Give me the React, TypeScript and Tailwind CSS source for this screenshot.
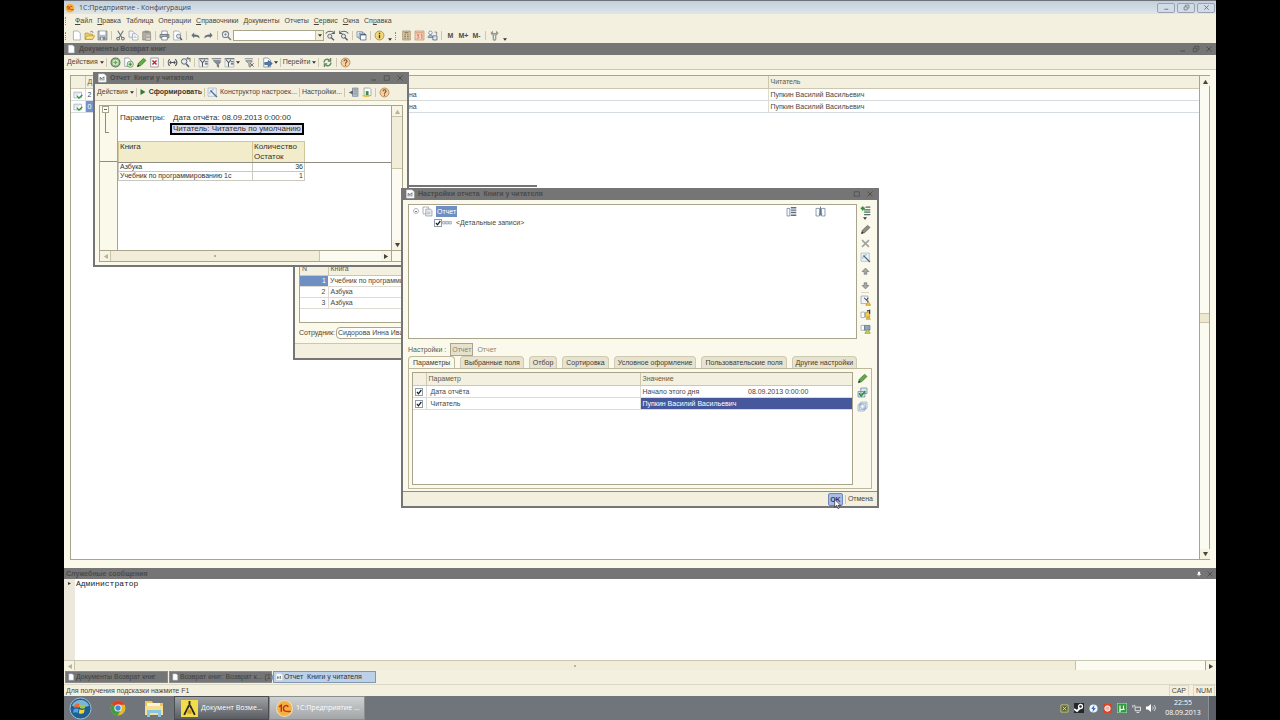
import type { ReactNode } from "react";

/* ICONS, all drawn on a 16x16 grid */
const icons: Record<string, ReactNode> = {
  page: <path d="M3.5 1.5h7l3 3v10h-10z" fill="#fff" stroke="#8a97a8" />,
  open: (
    <>
      <path d="M1.5 13.5v-9h5l1 1.500h5v7.500z" fill="#f0d264" stroke="#b08b25" />
      <path d="M1.500 13.500l3-5h11l-3 5z" fill="#fbe793" stroke="#b08b25" />
      <path d="M9 3c2-2 4-1 4 1" fill="none" stroke="#547" />
    </>
  ),
  save: (
    <>
      <path d="M1.500 1.500h13v13h-13z" fill="#b4bcc6" stroke="#6b7685" />
      <path d="M4 2h8v5H4z" fill="#fff" />
      <path d="M4 10h8v4H4z" fill="#7b8592" />
      <path d="M6 11h2v3H6z" fill="#fff" />
    </>
  ),
  cut: (
    <>
      <path d="M4 1l6 10M12 1L6 11" stroke="#66727f" strokeWidth="1.600" />
      <circle cx="4.500" cy="12.500" r="2" fill="none" stroke="#66727f" strokeWidth="1.500" />
      <circle cx="11.500" cy="12.500" r="2" fill="none" stroke="#66727f" strokeWidth="1.500" />
    </>
  ),
  copy: (
    <>
      <path d="M1.500 1.500h5l3 3v6h-8z" fill="#f4f6f8" stroke="#8a97a8" />
      <path d="M6.500 5.500h5l3 3v6h-8z" fill="#fff" stroke="#8a97a8" />
      <path d="M8 9h4M8 11h5" stroke="#a8b4c2" />
    </>
  ),
  paste: (
    <>
      <path d="M2.500 2.500h11v12h-11z" fill="#b5b1a5" stroke="#7c7a72" />
      <path d="M5 1h6v3H5z" fill="#8f8d86" />
      <path d="M7 6h7v9H7z" fill="#d8d6cf" stroke="#8f8d86" />
      <path d="M8 9h5M8 11h5" stroke="#8f8d86" />
    </>
  ),
  print: (
    <>
      <path d="M4 1.500h8v5H4z" fill="#fff" stroke="#6b7685" />
      <path d="M1.500 6.500h13v5h-13z" fill="#aab2bc" stroke="#59636f" />
      <path d="M4 9.500h8v5H4z" fill="#fff" stroke="#59636f" />
      <path d="M11 8h2" stroke="#3c8b3c" />
    </>
  ),
  preview: (
    <>
      <path d="M2.500 1.500h7l3 3v10h-10z" fill="#fff" stroke="#8a97a8" />
      <circle cx="9.500" cy="9" r="3" fill="#d6e4ee" stroke="#59636f" />
      <path d="M11.500 11l3 3.500" stroke="#59636f" strokeWidth="2" />
    </>
  ),
  undo: <path d="M2 7.500l4-4v3c5 0 8 1 8 6-2-2-4-3-8-2.500v2z" fill="#66727f" />,
  redo: <path d="M14 7.500l-4-4v3c-5 0-8 1-8 6 2-2 4-3 8-2.500v2z" fill="#66727f" />,
  search: (
    <>
      <circle cx="6.500" cy="6.500" r="4.500" fill="#e4ebef" stroke="#77828f" strokeWidth="1.500" />
      <path d="M4.500 6.500h4M6.500 4.500v4" stroke="#77828f" />
      <path d="M10 10l4.500 4.500" stroke="#77828f" strokeWidth="2.200" />
    </>
  ),
  findNext: (
    <>
      <path d="M1 5c3-4 9-4 12-1M13.500 1v4h-4" fill="none" stroke="#55606f" strokeWidth="1.500" />
      <circle cx="7" cy="9" r="3" fill="#dfe7ec" stroke="#55606f" strokeWidth="1.300" />
      <path d="M9 11l4 4" stroke="#55606f" strokeWidth="2" />
    </>
  ),
  findPrev: (
    <>
      <path d="M15 5c-3-4-9-4-12-1M2.500 1v4h4" fill="none" stroke="#55606f" strokeWidth="1.500" />
      <circle cx="8" cy="9" r="3" fill="#dfe7ec" stroke="#55606f" strokeWidth="1.300" />
      <path d="M10 11l4 4" stroke="#55606f" strokeWidth="2" />
    </>
  ),
  windows: (
    <>
      <path d="M1.500 2.500h8v8h-8z" fill="#fff" stroke="#55708f" />
      <path d="M4.500 4.500h8v8h-8z" fill="#dfe7f1" stroke="#55708f" />
      <path d="M6.500 6.500h8v8h-8z" fill="#fff" stroke="#39587c" />
      <path d="M6.500 7h8" stroke="#39587c" strokeWidth="1.500" />
    </>
  ),
  info: (
    <>
      <circle cx="8" cy="8" r="6.500" fill="#f2d879" stroke="#8e7a3a" />
      <path d="M8 7v5M8 4v1.800" stroke="#4a4334" strokeWidth="2" />
    </>
  ),
  help: (
    <>
      <circle cx="8" cy="8" r="6.500" fill="#f6cf9c" stroke="#a5713c" />
      <path d="M5.800 6.300c0-3 4.500-2.800 4.400-.2C10.200 7.800 8 7.800 8 9.800M8 11v1.600" fill="none" stroke="#6f4a2b" strokeWidth="1.500" />
    </>
  ),
  calc: (
    <>
      <path d="M2.500 1.500h11v13h-11z" fill="#d9c9a8" stroke="#94815b" />
      <path d="M5 4h6M5 7h2M9 7h2M5 9.500h2M9 9.500h2M5 12h2M9 12h2" stroke="#7a6647" strokeWidth="1.400" />
    </>
  ),
  calendar: (
    <>
      <path d="M1.500 1.500h13v13h-13z" fill="#f5d5bb" stroke="#b98b6e" />
      <path d="M2 4h12" stroke="#e0a688" strokeWidth="2" />
      <path d="M4 7h3l-1.500 2C8 9.500 7 13 4 12M10 7l1.500-.5V13" fill="none" stroke="#c8705a" strokeWidth="1.300" />
    </>
  ),
  users: (
    <>
      <circle cx="5" cy="4" r="2.500" fill="#fff" stroke="#55708f" />
      <path d="M1.500 11c0-5 7-5 7 0z" fill="#9ab4d0" stroke="#55708f" />
      <path d="M8.500 8.500h6v6h-6z" fill="#dfe7f1" stroke="#39587c" />
      <path d="M11 3h3v4" fill="none" stroke="#55606f" />
    </>
  ),
  tools: (
    <>
      <path d="M5 2c-3 2-2 5 1 5v7c1 1.500 3 1.500 4 0V7c3 0 4-3 1-5v3H5z" fill="#b7b7b0" stroke="#77776f" />
      <path d="M8 8v5" stroke="#fff" />
    </>
  ),
  add: (
    <>
      <circle cx="8" cy="8" r="6.500" fill="#8fc07f" stroke="#5d6f5c" strokeWidth="1.500" />
      <circle cx="8" cy="8" r="4" fill="#e9f4e5" />
      <path d="M5 8h6M8 5v6" stroke="#6fa565" strokeWidth="2" />
    </>
  ),
  addCopy: (
    <>
      <path d="M2.500 1.500h6l3 3v9h-9z" fill="#fff" stroke="#7f8b99" />
      <circle cx="10.500" cy="10.500" r="4.500" fill="#dff0da" stroke="#4f7a4f" />
      <path d="M8 10.500h5M10.500 8v5" stroke="#338a33" strokeWidth="1.600" />
    </>
  ),
  pencil: (
    <>
      <path d="M2 14l1.500-5L11 2l3.500 3L7 12.500z" fill="#5fae45" stroke="#33632a" />
      <path d="M2 14l1-3 2 2z" fill="#222" />
    </>
  ),
  pencilGray: (
    <>
      <path d="M2 14l1.500-5L11 2l3.500 3L7 12.500z" fill="#8c8f86" stroke="#55584f" />
      <path d="M2 14l1-3 2 2z" fill="#222" />
    </>
  ),
  deletePage: (
    <>
      <path d="M2.500 1.500h11v13h-11z" fill="#fff" stroke="#6e7a88" />
      <path d="M5 5l6 6M11 5l-6 6" stroke="#c8262e" strokeWidth="2.200" />
    </>
  ),
  range: (
    <path d="M4 3c-3 3-3 7 0 10M12 3c3 3 3 7 0 10M4 8h8M6 6L4 8l2 2M10 6l2 2-2 2" fill="none" stroke="#4f565e" strokeWidth="1.500" />
  ),
  searchBack: (
    <>
      <circle cx="6" cy="6.500" r="4" fill="#e4ebef" stroke="#59636f" strokeWidth="1.400" />
      <path d="M9 10l4 4.500" stroke="#59636f" strokeWidth="2.200" />
      <path d="M15 2h-5l2-2M10 2l2 2M14.500 2v5" fill="none" stroke="#59636f" strokeWidth="1.300" />
    </>
  ),
  filterSet: (
    <>
      <path d="M1.500 2.500h13v12h-13z" fill="#f4f4ee" stroke="#a0a9b2" />
      <path d="M1 2.500h14" stroke="#66727f" strokeWidth="1.600" />
      <path d="M3 4l3.500 4v6M10 4L7 8M10 7h4M10 10h4" fill="none" stroke="#4b5764" strokeWidth="1.500" />
    </>
  ),
  filter: (
    <>
      <path d="M1 2.500h14M3 5.500h11" stroke="#66727f" strokeWidth="1.600" />
      <path d="M5 7h9l-3 3.500V15l-2-1.500v-3z" fill="#8c98a5" stroke="#55606f" />
    </>
  ),
  filterOff: (
    <>
      <path d="M1 2.500h12M2 5.500h10" stroke="#8a8f94" strokeWidth="1.500" />
      <path d="M3 6h9l-3 4v5l-2-1.500V10z" fill="#b8bdc1" stroke="#7c7f84" />
      <path d="M9 9l5 5M14 9l-5 5" stroke="#666" strokeWidth="1.400" />
    </>
  ),
  goto: (
    <>
      <path d="M2.500 1.500h6l4 3v10h-10z" fill="#fff" stroke="#6e7a88" />
      <path d="M4 8h5V5l6 4.500-6 4.500v-3H4z" fill="#4f7baf" stroke="#2f4f77" />
    </>
  ),
  refresh: (
    <path d="M3 8c0-5 6-6 8-3M13 8c0 5-6 6-8 3M12.500 1.500v4.500H8.500M3.500 14.500V10h4" fill="none" stroke="#5c8a5c" strokeWidth="1.900" />
  ),
  doc: (
    <>
      <path d="M2.500 1.500h9l3 3v10h-12z" fill="#fff" stroke="#d9d9d9" />
      <path d="M5 7v5M8 9v3M11 6v6M5 7l3 2 3-3" stroke="#4d5a66" strokeWidth="1.300" fill="none" />
    </>
  ),
  posted: (
    <>
      <path d="M1.500 3.500h12v9h-12z" fill="#fff" stroke="#7f93a8" />
      <path d="M3 6h8M3 8h4" stroke="#c0cbd6" />
      <path d="M6 9l3.500 4L15 8" fill="none" stroke="#37933a" strokeWidth="2.200" />
    </>
  ),
  play: <path d="M3 2l10 6-10 6z" fill="#2f7b35" />,
  wand: (
    <>
      <path d="M1.500 1.500h12v12h-12z" fill="#eef2f7" stroke="#9fb0c3" />
      <path d="M4 10c0-4 2-6 6-6" fill="none" stroke="#7d93ac" />
      <path d="M5 5l9.500 9.500" stroke="#4d6d90" strokeWidth="1.800" />
    </>
  ),
  loadSet: (
    <>
      <path d="M6.500 1.500h8v12h-8z" fill="#b9c3cd" stroke="#6d7a88" />
      <path d="M8 4h5M8 7h5M8 10h5" stroke="#6d7a88" />
      <path d="M7 5v6L1 8z" fill="#59636f" />
    </>
  ),
  saveSet: (
    <>
      <path d="M4.500 1.500h8l2 2v9h-10z" fill="#fff" stroke="#7f8b99" />
      <path d="M7 6h4v6H7z" fill="#3e8d3a" />
      <path d="M1 12l4 3 8-1-2-2z" fill="#e7c64b" />
    </>
  ),
  pages: (
    <>
      <path d="M1.500 1.500h8v10h-8z" fill="#fff" stroke="#8a8f99" />
      <path d="M5.500 4.500h7l2 2v8h-9z" fill="#e9ecef" stroke="#8a8f99" />
      <path d="M7 9h5M7 11h5" stroke="#a9b0b9" />
    </>
  ),
  records: (
    <path d="M1 5.500h4v4H1zM6 5.500h4v4H6zM11 5.500h4v4h-4z" fill="#dfe6ee" stroke="#8593a3" />
  ),
  structure: (
    <>
      <path d="M1.500 3.500h4v11h-4z" fill="#fff" stroke="#5b7089" />
      <path d="M7 2.500h8M7 6h8M7 9.500h8M7 13.500h8" stroke="#5c6f85" strokeWidth="2" />
    </>
  ),
  columns: (
    <>
      <path d="M1.500 3.500h5v11h-5zM9.500 3.500h5v11h-5z" fill="#fff" stroke="#5b7089" />
      <path d="M8 1v12M6 11l2 2.500 2-2.500" fill="none" stroke="#5c6f85" strokeWidth="1.400" />
    </>
  ),
  addItem: (
    <>
      <path d="M1 5h6M4 2v6" stroke="#2d8a34" strokeWidth="2.400" />
      <path d="M8 3h7M6 7h9M6 10.500h9M6 14h9" stroke="#4b6c62" strokeWidth="1.800" />
    </>
  ),
  cross: <path d="M3 3l10 10M13 3L3 13" stroke="#a3a49e" strokeWidth="2.400" />,
  up: <path d="M8 3l5 5h-3v4H6V8H3z" fill="#a5a7a3" stroke="#777a77" />,
  down: <path d="M8 13l5-5h-3V4H6v4H3z" fill="#a5a7a3" stroke="#777a77" />,
  warnPage: (
    <>
      <path d="M1.500 1.500h10v11h-10z" fill="#f2f4f7" stroke="#8a97a8" />
      <path d="M6 4l6 6M12 4L9 8" stroke="#3d4752" strokeWidth="1.500" />
      <path d="M12 9l3.500 6h-7z" fill="#edc73f" stroke="#b4912a" />
    </>
  ),
  warnBook: (
    <>
      <path d="M1.500 4.500h5v8h-5z" fill="#fff" stroke="#8a97a8" />
      <path d="M8 5h6v7H8z" fill="#f0cf4f" stroke="#b4912a" />
      <path d="M10 3l4-1v5" fill="none" stroke="#343b43" strokeWidth="1.800" />
      <path d="M12 11l3 4h-6z" fill="#edc73f" stroke="#b4912a" />
    </>
  ),
  warnDisk: (
    <>
      <path d="M1.500 3.500h5v7h-5z" fill="#fff" stroke="#8a97a8" />
      <path d="M6.500 3.500h8v7h-8z" fill="#90a4bb" stroke="#596f88" />
      <path d="M11 9l4 6H7z" fill="#c9d04f" stroke="#7e9a3a" />
    </>
  ),
  checkAll: (
    <>
      <path d="M5.500 1.500h9v8h-9zM1.500 6.500h10v8h-10z" fill="#dfe9f1" stroke="#5d7c98" />
      <path d="M3 9l3 4 6-7" fill="none" stroke="#2f9436" strokeWidth="2.300" />
    </>
  ),
  uncheckAll: (
    <path d="M5.500 1.500h9v9h-9zM3.500 3.500h9v9h-9zM1.500 5.500h9v9h-9z" fill="#fff" stroke="#7d9cbd" />
  ),
  oneC: (
    <>
      <circle cx="8" cy="8" r="7.500" fill="#f5b13d" stroke="#e8dcc0" />
      <path d="M3 6.500L5 5v6M11.500 6.500c-.8-2-4.500-1.700-4.500 1.500s3.200 2.800 7 2.700" fill="none" stroke="#c3302a" strokeWidth="1.400" />
    </>
  ),
  minimize: <path d="M3 12h9" stroke="currentColor" strokeWidth="1.800" />,
  maximize: <path d="M2.500 3.500h10v9h-10z" fill="none" stroke="currentColor" strokeWidth="1.500" />,
  restore: <path d="M5.500 6V2.500h8v7H11M2.500 6.500h7v7h-7z" fill="none" stroke="currentColor" strokeWidth="1.500" />,
  close: <path d="M3 3l10 10M13 3L3 13" stroke="currentColor" strokeWidth="1.800" />,
  pin: <path d="M5 2h6v6h2v2H9v4H7v-4H3V8h2z" fill="currentColor" />,
};

function Icon({ name, className = "size-3" }: { name: string; className?: string }) {
  return (
    <svg viewBox="0 0 16 16" className={`${className} shrink-0`} aria-hidden="true">
      {icons[name]}
    </svg>
  );
}

function IconButton({ name, label }: { name: string; label: string }) {
  return (
    <button aria-label={label} className="w-[13px] h-3 shrink-0 flex items-center justify-center">
      <Icon name={name} className="size-[11px]" />
    </button>
  );
}

const Sep = () => (
  <span className="w-[5px] shrink-0 flex justify-center">
    <span className="w-px h-[9px] bg-[#cbc7b2]" />
  </span>
);

const Grip = () => <span className="w-1 h-2 mx-px shrink-0 border-l border-dotted border-[#8f8d80]" />;

const Caret = ({ className = "" }: { className?: string }) => (
  <svg viewBox="0 0 6 4" className={`w-1 h-[3px] shrink-0 ${className}`} aria-hidden="true">
    <path d="M0 0h6L3 4z" fill="#333" />
  </svg>
);

/* a single scroll arrow */
function Arrow({ dir, dim }: { dir: "up" | "down" | "left" | "right"; dim?: boolean }) {
  const paths = { up: "M0 6h6L3 1z", down: "M0 0h6L3 5z", left: "M6 0v6L1 3z", right: "M0 0v6l5-3z" };
  return (
    <button aria-label={dir} className="size-[10px] shrink-0 flex items-center justify-center bg-[#f7f4e4]">
      <svg viewBox="0 0 6 6" className="size-[5px]">
        <path d={paths[dir]} fill={dim ? "#b5b2a2" : "#45453d"} />
      </svg>
    </button>
  );
}

function TitleBar({ icon, title, buttons }: { icon?: string; title: string; buttons: string[] }) {
  return (
    <div className="h-3 shrink-0 flex items-center gap-[3px] px-0.5 bg-[#757575] text-[#4b4b4b] font-bold">
      {icon && <Icon name={icon} className="size-[10px]" />}
      <span className="flex-1 whitespace-pre">{title}</span>
      {buttons.map((b) => (
        <button key={b} aria-label={b} className="w-[10px] flex justify-center">
          <Icon name={b} className="size-2" />
        </button>
      ))}
    </div>
  );
}

const menu = ["Файл", "Правка", "Таблица", "Операции", "Справочники", "Документы", "Отчеты", "Сервис", "Окна", "Справка"];
const underlined = [0, 0, -1, -1, 0, -1, -1, 0, 0, 2];

/* the columns are cut short where the report window covers them */
const journal = [
  { date: "2", staff: "на", reader: "Пупкин Василий Васильевич", selected: false },
  { date: "0", staff: "на", reader: "Пупкин Василий Васильевич", selected: true },
];

const tabs = [
  "Параметры",
  "Выбранные поля",
  "Отбор",
  "Сортировка",
  "Условное оформление",
  "Пользовательские поля",
  "Другие настройки",
];

function MainToolbar() {
  return (
    <div className="h-[15px] flex items-center">
      <Grip />
      <IconButton name="page" label="Новый" />
      <IconButton name="open" label="Открыть" />
      <IconButton name="save" label="Сохранить" />
      <Sep />
      <IconButton name="cut" label="Вырезать" />
      <IconButton name="copy" label="Копировать" />
      <IconButton name="paste" label="Вставить" />
      <Sep />
      <IconButton name="print" label="Печать" />
      <IconButton name="preview" label="Предварительный просмотр" />
      <Sep />
      <IconButton name="undo" label="Отменить" />
      <IconButton name="redo" label="Вернуть" />
      <Sep />
      <IconButton name="search" label="Найти" />
      <div className="w-[91px] h-[11px] flex border border-[#a9a48c] bg-white">
        <input aria-label="Строка поиска" className="min-w-0 flex-1 px-1 outline-none" />
        <button aria-label="Список" className="w-2 flex items-center justify-center bg-[#f1edd3] border-l border-[#c9c4a8]">
          <Caret />
        </button>
      </div>
      <IconButton name="findNext" label="Найти далее" />
      <IconButton name="findPrev" label="Найти назад" />
      <Sep />
      <IconButton name="windows" label="Окна" />
      <Sep />
      <IconButton name="info" label="Справка" />
      <Caret className="mx-0.5 mt-2" />
      <Grip />
      <IconButton name="calc" label="Калькулятор" />
      <IconButton name="calendar" label="Календарь" />
      <IconButton name="users" label="Пользователи" />
      <Sep />
      {["M", "M+", "M-"].map((m) => (
        <button key={m} className="w-[13px] text-center font-bold text-[#4f4b40]">
          {m}
        </button>
      ))}
      <Sep />
      <IconButton name="tools" label="Настройка" />
      <Caret className="mx-0.5 mt-2" />
    </div>
  );
}

function JournalToolbar() {
  return (
    <div className="h-[15px] shrink-0 flex items-center pl-[3px] bg-[#f4f0e0] border-b border-[#cbc7b2]">
      <button className="flex items-center gap-0.5">
        Действия <Caret />
      </button>
      <Sep />
      <IconButton name="add" label="Добавить" />
      <IconButton name="addCopy" label="Добавить копированием" />
      <IconButton name="pencil" label="Изменить" />
      <IconButton name="deletePage" label="Пометить на удаление" />
      <Sep />
      <IconButton name="range" label="Интервал" />
      <IconButton name="searchBack" label="Поиск" />
      <Sep />
      <IconButton name="filterSet" label="Отбор" />
      <IconButton name="filter" label="Отбор по значению" />
      <IconButton name="filterSet" label="История отборов" />
      <Caret className="mr-[3px]" />
      <IconButton name="filterOff" label="Отключить отбор" />
      <Sep />
      <IconButton name="goto" label="Ввести на основании" />
      <Caret />
      <Sep />
      <button className="flex items-center gap-0.5">
        Перейти <Caret />
      </button>
      <Sep />
      <IconButton name="refresh" label="Обновить" />
      <Sep />
      <IconButton name="help" label="Помощь" />
    </div>
  );
}

function Journal() {
  return (
    <div className="flex-1 flex flex-col px-1.5 pt-[5px] pb-2">
      <div className="flex-1 flex bg-white border border-[#a9a48c]">
        <div className="flex-1">
          <table className="w-full table-fixed border-collapse text-left">
            <thead>
              <tr className="h-3 bg-[#f4f0e0] text-[#5f5a48]">
                <th className="w-[14px] border-r border-b border-[#cbc7b2]" />
                <th className="w-[322px] p-0 pl-0.5 font-normal border-b border-[#cbc7b2]">Д</th>
                <th className="w-[361px] p-0 font-normal border-r border-b border-[#cbc7b2]" />
                <th className="p-0 pl-0.5 font-normal border-b border-[#cbc7b2]">Читатель</th>
              </tr>
            </thead>
            <tbody>
              {journal.map((row) => (
                <tr key={row.date} className="h-[11px] leading-[11px] border-b border-[#d5dbde]">
                  <td className="p-0 pl-0.5 border-r border-[#dcdcd4]">
                    <Icon name="posted" className="size-[10px]" />
                  </td>
                  <td className={row.selected ? "p-0 pl-0.5 bg-[#7295c9] text-white" : "p-0 pl-0.5"}>{row.date}</td>
                  <td className="p-0 pl-0.5 border-r border-[#dcdcd4]">{row.staff}</td>
                  <td className="p-0 pl-0.5">{row.reader}</td>
                </tr>
              ))}
            </tbody>
          </table>
        </div>
        <div className="w-[10px] flex flex-col justify-between border-l border-[#a9a48c] bg-[#fcfbf1]">
          <Arrow dir="up" />
          <div className="h-[10px] bg-[#ede8cf] border-y border-[#c9c4a8]" />
          <Arrow dir="down" />
        </div>
      </div>
    </div>
  );
}

/* document window that lies behind the report and its settings */
function ReturnWindow() {
  return (
    <section className="absolute left-[229px] top-[199px] w-[240px] flex flex-col bg-[#fbf9ea] border-2 border-[#757575]">
      <div className="h-3 bg-[#757575]" />
      <div className="mx-1 mt-1.5 h-[61px] bg-white border border-[#a9a48c]">
        <table className="w-full table-fixed border-collapse text-left">
          <thead>
            <tr className="h-3 bg-[#f4f0e0] text-[#5f5a48]">
              <th className="w-7 p-0 pl-0.5 font-normal border-r border-b border-[#cbc7b2]">N</th>
              <th className="p-0 pl-0.5 font-normal border-b border-[#cbc7b2]">Книга</th>
            </tr>
          </thead>
          <tbody>
            {["Учебник по программированию 1с", "Азбука", "Азбука"].map((book, i) => (
              <tr key={i} className="h-[11px] leading-[10px] border-b border-[#dcdcd4]">
                <td className={i === 0 ? "p-0 pr-0.5 text-right bg-[#6d8fc3] text-white" : "p-0 pr-0.5 text-right border-r border-[#dcdcd4]"}>
                  {i + 1}
                </td>
                <td className="p-0 pl-0.5 truncate">{book}</td>
              </tr>
            ))}
          </tbody>
        </table>
      </div>
      <div className="flex items-center gap-px px-1 py-1">
        <label htmlFor="employee">Сотрудник:</label>
        <input id="employee" defaultValue="Сидорова Инна Ивановна" className="h-3 w-[120px] px-px bg-white border border-[#a9a48c] rounded-sm" />
      </div>
      <div className="h-[15px] bg-[#f4f0e0] border-t border-[#cbc7b2]" />
    </section>
  );
}

function ReportWindow() {
  return (
    <section className="absolute left-[29px] top-[29px] w-[316px] bg-[#fbf9ea] border-2 border-t-0 border-[#757575]">
      <TitleBar icon="doc" title="Отчет  Книги у читателя" buttons={["minimize", "maximize", "close"]} />
      <div className="h-[17px] flex items-center pl-0.5 bg-[#f4f0e0] border-b border-[#cbc7b2]">
        <button className="flex items-center gap-0.5">
          Действия <Caret />
        </button>
        <Sep />
        <button className="flex items-center gap-0.5 font-bold text-[#3b382e]">
          <Icon name="play" className="size-2" /> Сформировать
        </button>
        <Sep />
        <button className="flex items-center gap-0.5">
          <Icon name="wand" className="size-[11px]" /> Конструктор настроек...
        </button>
        <Sep />
        <button>Настройки...</button>
        <Sep />
        <IconButton name="loadSet" label="Загрузить настройки" />
        <IconButton name="saveSet" label="Сохранить настройки" />
        <Sep />
        <IconButton name="help" label="Помощь" />
      </div>
      <div className="mx-1 mt-1 mb-[3px] border border-[#a9a48c] bg-white">
        <div className="flex">
          <div className="w-[18px] flex flex-col border-r border-[#a9a48c] bg-[#fbf9ea]">
            <div className="h-[56px] pl-0.5 border-b border-[#8f8d80]">
              <button aria-label="Свернуть" className="size-[7px] flex items-center justify-center border border-[#a9a48c] bg-white">
                <span className="w-[3px] h-px bg-[#666]" />
              </button>
              <div className="ml-[3px] w-1 h-5 border-l border-b border-[#8f8d80]" />
            </div>
          </div>
          <div className="flex-1 h-[144px] text-[8px] leading-[10px] text-[#33332e]">
            <div className="grid grid-cols-[52px_134px] content-start pt-[7px] h-[35px]">
              <span className="pl-0.5">Параметры:</span>
              <span className="pl-[3px]">Дата отчёта: 08.09.2013 0:00:00</span>
              <span />
              <span className="h-3 px-px leading-2 whitespace-nowrap border-2 border-black bg-[#d6daee]">Читатель: Читатель по умолчанию</span>
            </div>
            <table className="w-full table-fixed border-collapse text-left">
              <thead>
                <tr className="h-[20px] align-top">
                  <th className="w-[134px] p-0 pl-px font-normal bg-[#f3ecca] border border-[#cfc79c] border-b-[#8f8d80]">Книга</th>
                  <th className="w-[52px] p-0 pl-px font-normal bg-[#f3ecca] border border-[#cfc79c] border-b-[#8f8d80]">
                    Количество
                    <br />
                    Остаток
                  </th>
                  <th className="p-0 border-b border-[#8f8d80]" />
                </tr>
              </thead>
              <tbody className="text-[7px] leading-2">
                <tr>
                  <td className="p-0 pl-px border border-[#c9c9c0]">Азбука</td>
                  <td className="p-0 pr-px text-right border border-[#c9c9c0]">36</td>
                  <td />
                </tr>
                <tr>
                  <td className="p-0 pl-px border border-[#c9c9c0]">Учебник по программированию 1с</td>
                  <td className="p-0 pr-px text-right border border-[#c9c9c0]">1</td>
                  <td />
                </tr>
              </tbody>
            </table>
          </div>
          <div className="w-[11px] flex flex-col border-l border-[#a9a48c] bg-[#fcfbf1]">
            <Arrow dir="up" dim />
            <div className="h-[53px] bg-[#f1edd8] border-y border-[#c9c4a8]" />
            <div className="flex-1" />
            <Arrow dir="down" />
          </div>
        </div>
        <div className="flex border-t border-[#a9a48c]">
          <Arrow dir="left" dim />
          <div className="w-[210px] flex items-center justify-center bg-[#f1edd8] border-x border-[#c9c4a8]">
            <span className="size-0.5 bg-[#b5b2a2]" />
          </div>
          <div className="flex-1 bg-[#fcfbf1]" />
          <Arrow dir="right" />
          <div className="w-[11px] border-l border-[#a9a48c] bg-[#fbf9ea]" />
        </div>
      </div>
    </section>
  );
}

const treeTools = [
  ["pencilGray", "Изменить"],
  ["cross", "Удалить"],
  ["wand", "Конструктор"],
  ["up", "Вверх"],
  ["down", "Вниз"],
];

const fileTools = [
  ["warnPage", "Стандартные настройки"],
  ["warnBook", "Загрузить"],
  ["warnDisk", "Сохранить"],
];

const params = [
  { name: "Дата отчёта", value: "Начало этого дня", extra: "08.09.2013 0:00:00", active: false },
  { name: "Читатель", value: "Пупкин Василий Васильевич", extra: "", active: true },
];

function Check({ label }: { label: string }) {
  return (
    <span className="relative size-2 shrink-0 block">
      <input type="checkbox" defaultChecked aria-label={label} className="appearance-none block size-2 bg-white border border-[#8f9bab]" />
      <svg viewBox="0 0 8 8" className="absolute inset-0 size-2 pointer-events-none">
        <path d="M2 4l1.500 1.800L6.300 2" fill="none" stroke="#222" strokeWidth="1.300" />
      </svg>
    </span>
  );
}

function SettingsDialog() {
  return (
    <section className="absolute left-[337px] top-[145px] w-[478px] bg-[#fbf9ec] border-2 border-t-0 border-[#757575]">
      <TitleBar icon="doc" title="Настройки отчета  Книги у читателя" buttons={["maximize", "close"]} />

      {/* STRUCTURE TREE */}
      <div className="flex pl-[5px] pt-1">
        <div className="flex-1 h-[135px] bg-white border border-[#a9a48c]">
          <div className="flex items-center h-3 pl-1">
            <button aria-label="Свернуть" className="size-[6px] rounded-full flex items-center justify-center border border-[#b5b5b5]">
              <span className="w-0.5 h-px bg-[#777]" />
            </button>
            <Icon name="pages" className="size-[11px] mx-[3px]" />
            <span className="px-px leading-[11px] bg-[#6d8fc3] text-white">Отчет</span>
            <span className="flex-1" />
            <Icon name="structure" className="size-[11px]" />
            <Icon name="columns" className="size-[11px] ml-[18px] mr-[30px]" />
          </div>
          <div className="flex items-center h-[11px] pl-[25px]">
            <Check label="Детальные записи" />
            <Icon name="records" className="size-[10px]" />
            <span className="ml-1">&lt;Детальные записи&gt;</span>
          </div>
        </div>
        <div className="w-5 flex flex-col items-center pr-1">
          <IconButton name="addItem" label="Добавить" />
          <Caret className="my-px" />
          <div className="flex flex-col gap-0.5 pt-0.5">
            {treeTools.map(([name, label]) => (
              <IconButton key={name} name={name} label={label} />
            ))}
          </div>
          <span className="w-2 h-px my-px bg-[#d8d4be]" />
          <div className="flex flex-col gap-0.5">
            {fileTools.map(([name, label]) => (
              <IconButton key={name} name={name} label={label} />
            ))}
          </div>
        </div>
      </div>

      <div className="flex items-center gap-1 h-[13px] mt-1 pl-[5px] text-[#5f5a48]">
        <span>Настройки :</span>
        <button className="h-[13px] px-px bg-[#e6e1cd] border border-[#a9a48c] text-[#8b8672]">Отчет</button>
        <span className="text-[#8b8672]">Отчет</span>
      </div>

      {/* TABS */}
      <div role="tablist" className="flex gap-[5px] pl-[5px] h-3">
        {tabs.map((tab, i) => (
          <button
            key={tab}
            role="tab"
            aria-selected={i === 0}
            className={
              i === 0
                ? "px-1 bg-[#fbf9ec] border border-b-0 border-[#bdb89c] rounded-t text-[#3f3c30]"
                : "px-[3px] bg-[#e8e3d0] border border-b-0 border-[#cfcab2] rounded-t text-[#3f3c30]"
            }
          >
            {tab}
          </button>
        ))}
      </div>
      <div className="flex ml-[5px] mr-[5px] p-[3px] pr-0 border border-[#bdb89c]">
        <div className="flex-1 h-[113px] bg-white border border-[#a9a48c]">
          <table className="w-full table-fixed border-collapse text-left">
            <thead>
              <tr className="h-3 bg-[#f4f0e0] text-[#5f5a48]">
                <th className="w-[13px] p-0 border-r border-b border-[#cbc7b2]" />
                <th className="w-[214px] p-0 pl-0.5 font-normal border-r border-b border-[#cbc7b2]">Параметр</th>
                <th colSpan={2} className="p-0 pl-0.5 font-normal border-b border-[#cbc7b2]">Значение</th>
              </tr>
            </thead>
            <tbody>
              {params.map((p) => (
                <tr key={p.name} className="h-[11px] leading-[11px] border-b border-[#d5dbde]">
                  <td className="p-0 pl-0.5 border-r border-[#dcdcd4]">
                    <Check label={p.name} />
                  </td>
                  <td className="p-0 pl-1 border-r border-[#dcdcd4]">{p.name}</td>
                  <td className={p.active ? "p-0 pl-0.5 bg-[#46579c] text-white" : "p-0 pl-0.5"}>{p.value}</td>
                  <td className={p.active ? "p-0 bg-[#46579c]" : "p-0 pl-0.5"}>{p.extra}</td>
                </tr>
              ))}
            </tbody>
          </table>
        </div>
        <div className="w-[18px] flex flex-col items-center gap-0.5">
          <IconButton name="pencil" label="Изменить значение" />
          <IconButton name="checkAll" label="Отметить все" />
          <IconButton name="uncheckAll" label="Снять отметки" />
        </div>
      </div>

      <div className="flex items-center justify-end h-[15px] mt-0.5 pr-1 bg-[#f4f0e0] border-t border-[#8f8d80]">
        <button className="w-[15px] h-[13px] font-bold text-[#27397c] bg-[#a9bce4] border border-[#6f86bd] rounded-xs">OK</button>
        <Sep />
        <button>Отмена</button>
      </div>

      {/* MOUSE POINTER */}
      <svg viewBox="0 0 12 16" className="absolute right-[35px] -bottom-1 w-2 h-3 pointer-events-none">
        <path d="M1 1v12l3-3 2 5 2-1-2-4h4z" fill="#fff" stroke="#222" />
      </svg>
    </section>
  );
}

function Messages() {
  return (
    <section className="shrink-0">
      <div className="h-[11px] flex items-center gap-1 px-0.5 bg-[#757575] text-[#4b4b4b] font-bold">
        <span className="flex-1">Служебные сообщения</span>
        <button aria-label="Закрепить" className="text-white">
          <Icon name="pin" className="size-[6px]" />
        </button>
        <button aria-label="Закрыть">
          <Icon name="close" className="size-2" />
        </button>
      </div>
      <div className="h-[81px] flex bg-white">
        <div className="w-[11px] pt-0.5 flex justify-center bg-[#ece9dc]">
          <svg viewBox="0 0 4 4" className="size-[3px] mt-px">
            <path d="M0 0l4 2-4 2z" fill="#333" />
          </svg>
        </div>
        <p className="pl-px text-[8px] leading-[10px] text-[#222] font-['Liberation_Mono',monospace]">Администратор</p>
      </div>
      <div className="h-[10px] flex border-t border-[#cbc7b2]">
        <Arrow dir="left" dim />
        <div className="w-[87%] flex items-center justify-center bg-[#f1edd8] border-x border-[#c9c4a8]">
          <span className="size-0.5 bg-[#b5b2a2]" />
        </div>
        <div className="flex-1 bg-[#fcfbf1] border-r border-[#a9a48c]" />
        <Arrow dir="right" />
      </div>
    </section>
  );
}

const windowTabs = [
  { title: "Документы Возврат книг", icon: "page", active: false },
  { title: "Возврат книг: Возврат к... (1)", icon: "page", active: false },
  { title: "Отчет  Книги у читателя", icon: "doc", active: true },
];

function Taskbar() {
  return (
    <footer className="h-6 shrink-0 flex items-center pl-1 bg-[#70757b] text-white font-['Open_Sans',sans-serif]">
      <button aria-label="Пуск" className="w-6 flex justify-center">
        <svg viewBox="0 0 24 24" className="size-[23px]">
          <circle cx="12" cy="12" r="11" fill="#1f5f93" stroke="#9cc0d8" />
          <path d="M3 9c3-8 15-8 18 0-5 2-12 2-18 0z" fill="#7fb4d6" />
          <path d="M6 8c2-1.500 3.500-1.500 5-.6l-.8 4C8.500 10.500 7 10.600 5.200 11.600z" fill="#ee6a33" />
          <path d="M12 7.800c2 .8 3.500.8 5.500-.3l-.9 4c-1.800 1-3.400 1-5.300.1z" fill="#9ccc3c" />
          <path d="M5 12.700c1.800-1 3.300-1 5-.2l-.8 4c-1.700-.8-3.200-.8-5 0z" fill="#4aa8e8" />
          <path d="M11 12.900c1.900.8 3.500.8 5.400-.2l-.9 4c-1.900 1-3.400 1-5.300.2z" fill="#fbd13a" />
        </svg>
      </button>
      <button aria-label="Chrome" className="ml-[18px] w-4">
        <svg viewBox="0 0 16 16" className="size-4">
          <circle cx="8" cy="8" r="7.500" fill="#e0b92c" />
          <path d="M8 8L1.500 4.200A7.500 7.500 0 0 1 14.800 4.800H8z" fill="#d8412f" />
          <path d="M8 8L1.500 4.200A7.500 7.500 0 0 0 7.500 15.500L11 9.500z" fill="#3f9d48" />
          <circle cx="8" cy="8" r="3.600" fill="#fff" />
          <circle cx="8" cy="8" r="2.700" fill="#4a86d8" />
        </svg>
      </button>
      <button aria-label="Проводник" className="ml-[18px] mr-[10px] w-5">
        <svg viewBox="0 0 20 18" className="w-5 h-[18px]">
          <path d="M1 2h7l1 2h10v12H1z" fill="#e8c660" />
          <path d="M3 4h13v5H3z" fill="#f7f3dd" />
          <path d="M1 7h18v9H1z" fill="#f6e08e" />
          <path d="M3 11h14v7h-3v-4H6v4H3z" fill="#8cc4e4" />
        </svg>
      </button>
      <button className="w-[95px] h-6 flex items-center gap-[3px] pl-1.5 whitespace-nowrap bg-linear-to-b from-[#a0a3a6] to-[#595d61] border border-[#4a4d50]">
        <svg viewBox="0 0 16 16" className="size-[17px] shrink-0">
          <path d="M0 0h16v16H0z" fill="#f3dc4b" />
          <path d="M8 1v4M7.500 5L3 14M8.500 5l4.500 9" stroke="#2a2a22" strokeWidth="1.800" />
          <path d="M6 9h4v4H6z" fill="#d9a520" />
        </svg>
        Документ Возме...
      </button>
      <button className="w-24 h-6 flex items-center gap-[3px] pl-1.5 whitespace-nowrap bg-linear-to-b from-[#cfd1d2] to-[#a3a6a8] border border-[#8b8e91]">
        <Icon name="oneC" className="size-[17px]" />
        1С:Предприятие ...
      </button>
      <div className="flex-1" />
      <div className="flex items-center gap-[5px] mr-2">
        <svg viewBox="0 0 10 10" className="size-[9px]">
          <path d="M1 1h8v8H1z" fill="#5a6148" stroke="#c5cc6a" />
          <path d="M3 3l4 4M7 3L3 7" stroke="#e3e88d" />
        </svg>
        <svg viewBox="0 0 10 10" className="size-[10px]">
          <path d="M0 0h10v10H0z" fill="#22262b" />
          <circle cx="6.500" cy="3.500" r="2" fill="none" stroke="#fff" strokeWidth="1.300" />
          <path d="M0 6l3 2 3-3" fill="none" stroke="#fff" strokeWidth="1.800" />
        </svg>
        <svg viewBox="0 0 10 10" className="size-[9px]">
          <circle cx="5" cy="5" r="4.500" fill="#eef4fb" />
          <path d="M6 1L2.500 5.500h2L4 9l3.500-4.500h-2z" fill="#2b6fc4" />
        </svg>
        <svg viewBox="0 0 10 10" className="size-[9px]">
          <path d="M0 0h10v10H0z" fill="#d8452d" />
          <circle cx="5" cy="5" r="3" fill="#f3b6a4" stroke="#fff" />
        </svg>
        <svg viewBox="0 0 10 10" className="size-[10px]">
          <path d="M0 0h10v10H0z" fill="#2f9a3e" stroke="#bfe5c3" />
          <path d="M3 9V2.500v3c0 1.500 3.500 1.500 3.500 0v-3V6l1 .8" fill="none" stroke="#fff" strokeWidth="1.200" />
        </svg>
        <svg viewBox="0 0 10 10" className="size-[9px]">
          <path d="M3.500 3.500h6v4h-6zM5 9.500h3M1 1v3M3 1v2" fill="none" stroke="#eee" />
        </svg>
        <svg viewBox="0 0 10 10" className="size-[10px]">
          <path d="M0 3.500h2L5 1v8L2 6.500H0z" fill="#fff" />
          <path d="M6.500 3.500c1 1 1 2 0 3M8 2c1.800 2 1.800 4 0 6" fill="none" stroke="#ddd" />
        </svg>
      </div>
      <div className="w-[38px] mr-1.5 text-center leading-[10px]">
        22:55
        <br />
        08.09.2013
      </div>
      <button aria-label="Показать рабочий стол" className="w-2 h-6 bg-[#5c6066] border-l border-[#8d9196]" />
    </footer>
  );
}

export default function App() {
  return (
    <div className="min-h-screen flex flex-col px-16 bg-black font-['Liberation_Sans',Arial,sans-serif] text-[7px] leading-3 text-[#4a463a]">
      <main className="flex-1 flex flex-col overflow-hidden bg-[#f4f0e0]">
        {/* APPLICATION TITLE */}
        <header className="h-[14px] shrink-0 flex items-center gap-1 pl-px bg-linear-to-b from-[#c3cfdd] to-[#dfe6ea] border-t border-[#6d7379]">
          <Icon name="oneC" className="size-[10px]" />
          <h1 className="flex-1 text-[#3f464e] font-['Open_Sans',sans-serif]">1С:Предприятие - Конфигурация</h1>
          <div className="flex gap-0.5 mr-px text-[#5d656e]">
            {["minimize", "restore", "close"].map((b) => (
              <button key={b} aria-label={b} className="w-[18px] h-[10px] flex items-center justify-center bg-[#d3dce6] border border-[#97a3b1] rounded-xs">
                <Icon name={b} className="size-[7px]" />
              </button>
            ))}
          </div>
        </header>

        <nav className="h-[14px] shrink-0 flex items-center gap-[5px]">
          <Grip />
          {menu.map((item, i) => (
            <button key={item}>
              {underlined[i] < 0 ? (
                item
              ) : (
                <>
                  {item.slice(0, underlined[i])}
                  <u>{item[underlined[i]]}</u>
                  {item.slice(underlined[i] + 1)}
                </>
              )}
            </button>
          ))}
        </nav>
        <MainToolbar />

        {/* WORK AREA */}
        <div className="relative flex-1 flex flex-col bg-[#fbf9ea]">
          <TitleBar icon="page" title="Документы Возврат книг" buttons={["minimize", "restore", "close"]} />
          <JournalToolbar />
          <Journal />
          <div className="absolute left-[343px] top-[32px] w-[130px] h-[112px] border-l-2 border-b-2 border-[#757575]" />
          <ReturnWindow />
          <ReportWindow />
          <SettingsDialog />
        </div>

        <Messages />

        {/* OPEN WINDOWS */}
        <div className="h-[14px] shrink-0 flex items-center gap-px pl-px">
          {windowTabs.map((tab) => (
            <button
              key={tab.title}
              className={
                tab.active
                  ? "w-[103px] h-3 flex items-center gap-px px-px whitespace-pre bg-[#bcd0e8] border border-[#8296b0] text-[#333]"
                  : "w-[103px] h-3 flex items-center gap-px px-px whitespace-pre bg-[#757575] border border-[#8b8b8b] text-[#404040]"
              }
            >
              <Icon name={tab.icon} className="size-2" />
              {tab.title}
            </button>
          ))}
        </div>
        <div className="h-3 shrink-0 flex items-center gap-1 pl-0.5 border-t border-[#dcd8c6]">
          <span className="flex-1">Для получения подсказки нажмите F1</span>
          <span className="px-0.5 leading-[10px] border border-[#dcd8c6]">CAP</span>
          <span className="px-0.5 mr-px leading-[10px] border border-[#dcd8c6]">NUM</span>
        </div>
        <Taskbar />
      </main>
    </div>
  );
}
